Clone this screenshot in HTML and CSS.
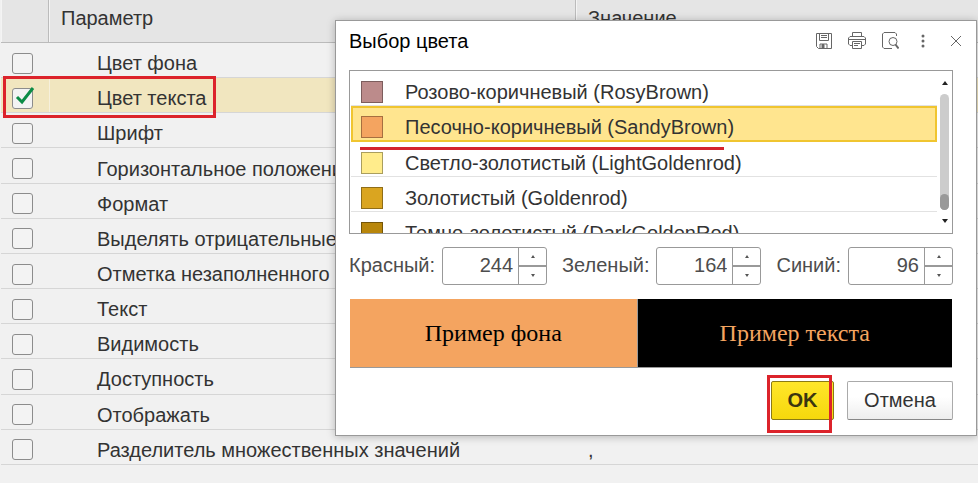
FILE: index.html
```html
<!DOCTYPE html>
<html lang="ru">
<head>
<meta charset="utf-8">
<title>Выбор цвета</title>
<link rel="stylesheet" href="styles.css">
</head>
<body>
<table class="params">
  <thead>
    <tr><th class="col-check"></th><th class="col-name">Параметр</th><th>Значение</th></tr>
  </thead>
  <tbody>
    <tr><td><input type="checkbox" id="p1"></td><td><label for="p1">Цвет фона</label></td><td></td></tr>
    <tr class="current"><td><span class="check"><input type="checkbox" id="p2" checked><svg class="tick" viewBox="0 0 20 20"><path d="M2 10l5 5L18 1" fill="none" stroke="#0c8c46" stroke-width="3"/></svg></span></td><td><label for="p2">Цвет текста</label></td><td></td></tr>
    <tr><td><input type="checkbox" id="p3"></td><td><label for="p3">Шрифт</label></td><td></td></tr>
    <tr><td><input type="checkbox" id="p4"></td><td><label for="p4">Горизонтальное положение</label></td><td></td></tr>
    <tr><td><input type="checkbox" id="p5"></td><td><label for="p5">Формат</label></td><td></td></tr>
    <tr><td><input type="checkbox" id="p6"></td><td><label for="p6">Выделять отрицательные</label></td><td></td></tr>
    <tr><td><input type="checkbox" id="p7"></td><td><label for="p7">Отметка незаполненного</label></td><td></td></tr>
    <tr><td><input type="checkbox" id="p8"></td><td><label for="p8">Текст</label></td><td></td></tr>
    <tr><td><input type="checkbox" id="p9"></td><td><label for="p9">Видимость</label></td><td></td></tr>
    <tr><td><input type="checkbox" id="p10"></td><td><label for="p10">Доступность</label></td><td></td></tr>
    <tr><td><input type="checkbox" id="p11"></td><td><label for="p11">Отображать</label></td><td></td></tr>
    <tr><td><input type="checkbox" id="p12"></td><td><label for="p12">Разделитель множественных значений</label></td><td>,</td></tr>
  </tbody>
</table>

<section class="dialog" role="dialog" aria-labelledby="dialog-title">
  <header class="dialog-head">
    <h1 id="dialog-title">Выбор цвета</h1>
    <div class="tools">
      <button type="button" aria-label="Сохранить"><svg viewBox="0 0 18 18"><path d="M1.500 1.500h15v15h-13l-2-2zM4.500 1.500v7h9v-7M6 3.500h6M6 5.500h6"/><path d="M5 16v-4h7v4"/><path d="M7 12.500h2v3.500H7z" fill="#666"/></svg></button>
      <button type="button" aria-label="Печать"><svg viewBox="0 0 18 18"><path d="M4.500 5V.5h9V5M4.500 13.500H2l-1.500-1.500V6L2 4.500h14L17.500 6v6L16 13.500h-2.500M1 7.500h16"/><path d="M4.500 9.500h9v7h-9zM6 11.500h6M6 13.500h4"/></svg></button>
      <button type="button" aria-label="Просмотр"><svg viewBox="0 0 18 18"><path d="M15.500 4V2L14 .5H3L1.500 2v13L3 16.500h8"/><circle cx="12" cy="9.500" r="4"/><path d="M14.500 12.500l3 4" stroke-width="2"/></svg></button>
      <button type="button" aria-label="Ещё"><svg viewBox="0 0 18 18"><g fill="#666" stroke="none"><circle cx="9" cy="4" r="1.500"/><circle cx="9" cy="9" r="1.500"/><circle cx="9" cy="14" r="1.500"/></g></svg></button>
      <button type="button" aria-label="Закрыть"><svg viewBox="0 0 18 18"><path d="M4 4l10 10M14 4L4 14"/></svg></button>
    </div>
  </header>

  <div class="list">
    <ul role="listbox" aria-label="Цвета">
      <li role="option"><span class="swatch rosy"></span>Розово-коричневый (RosyBrown)</li>
      <li role="option" class="selected" aria-selected="true"><span class="swatch sandy"></span>Песочно-коричневый (SandyBrown)</li>
      <li role="option"><span class="swatch light"></span>Светло-золотистый (LightGoldenrod)</li>
      <li role="option"><span class="swatch golden"></span>Золотистый (Goldenrod)</li>
      <li role="option"><span class="swatch dark"></span>Темно-золотистый (DarkGoldenRod)</li>
    </ul>
    <div class="scroll"><i class="up"></i><div class="track"><div class="thumb"></div></div><i class="down"></i></div>
    <div class="underline"></div>
  </div>

  <div class="channels">
    <div class="channel"><label for="red">Красный:</label><span class="spin"><input id="red" value="244"><span class="steps"><button type="button" aria-label="Больше"><i class="up"></i></button><button type="button" aria-label="Меньше"><i class="down"></i></button></span></span></div>
    <div class="channel"><label for="green">Зеленый:</label><span class="spin"><input id="green" value="164"><span class="steps"><button type="button" aria-label="Больше"><i class="up"></i></button><button type="button" aria-label="Меньше"><i class="down"></i></button></span></span></div>
    <div class="channel"><label for="blue">Синий:</label><span class="spin"><input id="blue" value="96"><span class="steps"><button type="button" aria-label="Больше"><i class="up"></i></button><button type="button" aria-label="Меньше"><i class="down"></i></button></span></span></div>
  </div>

  <div class="preview"><div class="back">Пример фона</div><div class="fore">Пример текста</div></div>

  <footer class="actions">
    <span class="marked"><button type="button" class="ok">OK</button></span>
    <button type="button" class="cancel">Отмена</button>
  </footer>
</section>
<div class="row-mark"></div>
</body>
</html>
```
FILE: styles.css
```css
*, *::after { box-sizing: border-box; }
body {
  margin: 0;
  min-height: 100vh;
  background: #f1f1f1;
  color: #333;
  font: 20px/24px "Liberation Sans", Arial, sans-serif;
  overflow: hidden;
}
button, input { font: inherit; color: inherit; margin: 0; padding: 0; }

.params {
  width: calc(100% - 1px);
  height: calc(100vh - 18px);
  margin-left: 1px;
  border-collapse: separate;
  border-spacing: 0;
  table-layout: fixed;
}
.params th {
  height: 43px;
  padding: 0 12px 6px;
  background: #e5e5e5;
  border-bottom: 1px solid #bbb;
  border-right: 1px solid #bbb;
  box-shadow: inset 1px 0 #f4f4f4;
  text-align: left;
  font-weight: 400;
}
.params th:last-child { border-right: 0; }
.params .col-check { width: 48px; }
.params .col-name { width: 527px; }
.params td {
  padding: 6px 12px 0;
  border-bottom: 1px solid #d6d6d6;
  white-space: nowrap;
  vertical-align: middle;
}
.params td:first-child { padding: 6px 11px 0; }
.params td:nth-child(2) { padding-left: 48px; }
.current td { background: #f1e6bf; }
.current td + td { box-shadow: inset 1px 0 #f6f0dc; }
.params input {
  appearance: none;
  display: block;
  width: 21px;
  height: 21px;
  border: 1px solid #8c8c8c;
  border-radius: 3px;
  background: #f3f3f3;
}
.check { position: relative; display: block; }
.tick { position: absolute; left: 3px; top: -1px; width: 20px; height: 20px; }
.row-mark {
  position: absolute;
  left: 3px;
  top: 76px;
  width: 213px;
  height: 42px;
  border: 3px solid #dc232b;
}

.dialog {
  position: absolute;
  left: 335px;
  right: 1px;
  top: 20px;
  padding: 6px 23px 15px 13px;
  background: #fff;
  border: 1px solid #999;
  box-shadow: 0 1px 8px rgba(0, 0, 0, .25);
}
.dialog-head { display: flex; justify-content: space-between; align-items: center; height: 28px; }
.dialog h1 { margin: 0; font-size: 20px; font-weight: 400; color: #000; }
.tools { display: flex; gap: 15px; margin-right: -12px; }
.tools button { width: 18px; height: 18px; border: 0; background: none; }
.tools svg { display: block; width: 18px; height: 18px; fill: none; stroke: #666; stroke-width: 1; }

.list {
  position: relative;
  display: flex;
  height: 164px;
  margin-top: 15px;
  padding-left: 1px;
  border: 1px solid #999;
}
.list ul { flex: 1; margin: 0; padding: 0; list-style: none; overflow: hidden; }
.list li {
  display: flex;
  align-items: center;
  gap: 22px;
  height: 35px;
  padding: 8px 10px 0;
  border-bottom: 1px solid #e2e2e2;
  white-space: nowrap;
}
.list .selected {
  height: 36px;
  padding: 6px 8px 0;
  border: 2px solid #f0c530;
  background: #ffe58f;
}
.swatch { width: 22px; height: 22px; border: 1px solid #777; }
.rosy { background: #bc8b8b; border-color: #7c5d5d; }
.sandy { background: #f4a460; border-color: #a66f40; }
.light { background: #ffec8b; border-color: #aa9e5d; }
.golden { background: #daa520; border-color: #8f6d18; }
.dark { background: #b8860b; border-color: #745508; }
.scroll { width: 15px; display: flex; flex-direction: column; align-items: center; padding: 10px 0; gap: 9px; }
.track { flex: 1; width: 9px; display: flex; align-items: flex-end; background: #ccc; border-radius: 5px; }
.thumb { width: 9px; height: 16px; background: #999; border-radius: 5px; }
.up, .down { display: block; border: 3px solid transparent; }
.up { border-top: 0; border-bottom: 4px solid #222; }
.down { border-bottom: 0; border-top: 4px solid #222; }
.underline { position: absolute; left: 10px; top: 76px; width: 364px; height: 3px; background: #d4232e; }

.channels { display: flex; justify-content: space-between; margin-top: 13px; color: #4d4d4d; }
.channel { display: flex; align-items: center; gap: 7px; }
.channel label { padding-bottom: 2px; }
.spin { display: flex; width: 105px; height: 38px; border: 1px solid #999; border-radius: 3px; }
.spin input { flex: 1; min-width: 0; padding: 0 5px 2px 0; border: 0; background: none; text-align: right; }
.steps { width: 28px; display: flex; flex-direction: column; border-left: 1px solid #999; }
.steps button { flex: 1; display: flex; align-items: center; justify-content: center; border: 0; background: none; }
.steps button + button { border-top: 2px solid #999; }
.steps .up { border-width: 0 2px 3px; border-bottom-color: #555; }
.steps .down { border-width: 3px 2px 0; border-top-color: #555; }

.preview {
  display: flex;
  height: 69px;
  margin: 14px 1px 0;
  border-bottom: 1px solid #999;
  font: 24px/28px "Liberation Serif", "Times New Roman", serif;
}
.preview div { display: flex; align-items: center; justify-content: center; }
.back { flex: 287; background: #f4a460; color: #000; border-right: 1px solid #999; }
.fore { flex: 315; background: #000; color: #f4a460; }

.actions { display: flex; justify-content: flex-end; gap: 13px; margin-top: 13px; }
.actions button { height: 39px; padding-bottom: 2px; border: 1px solid #aaa; border-radius: 2px; }
.marked { position: relative; }
.marked::after {
  content: "";
  position: absolute;
  left: -4px;
  top: -6px;
  width: 65px;
  height: 58px;
  border: 3px solid #dc232b;
}
.actions .ok {
  width: 63px;
  border-color: #8a7a14;
  background: linear-gradient(#ffe62a, #f6d80c);
  color: #3a3510;
  font-weight: 700;
}
.actions .cancel { width: 106px; background: linear-gradient(#fff 40%, #eee); border-bottom-color: #888; }
```
